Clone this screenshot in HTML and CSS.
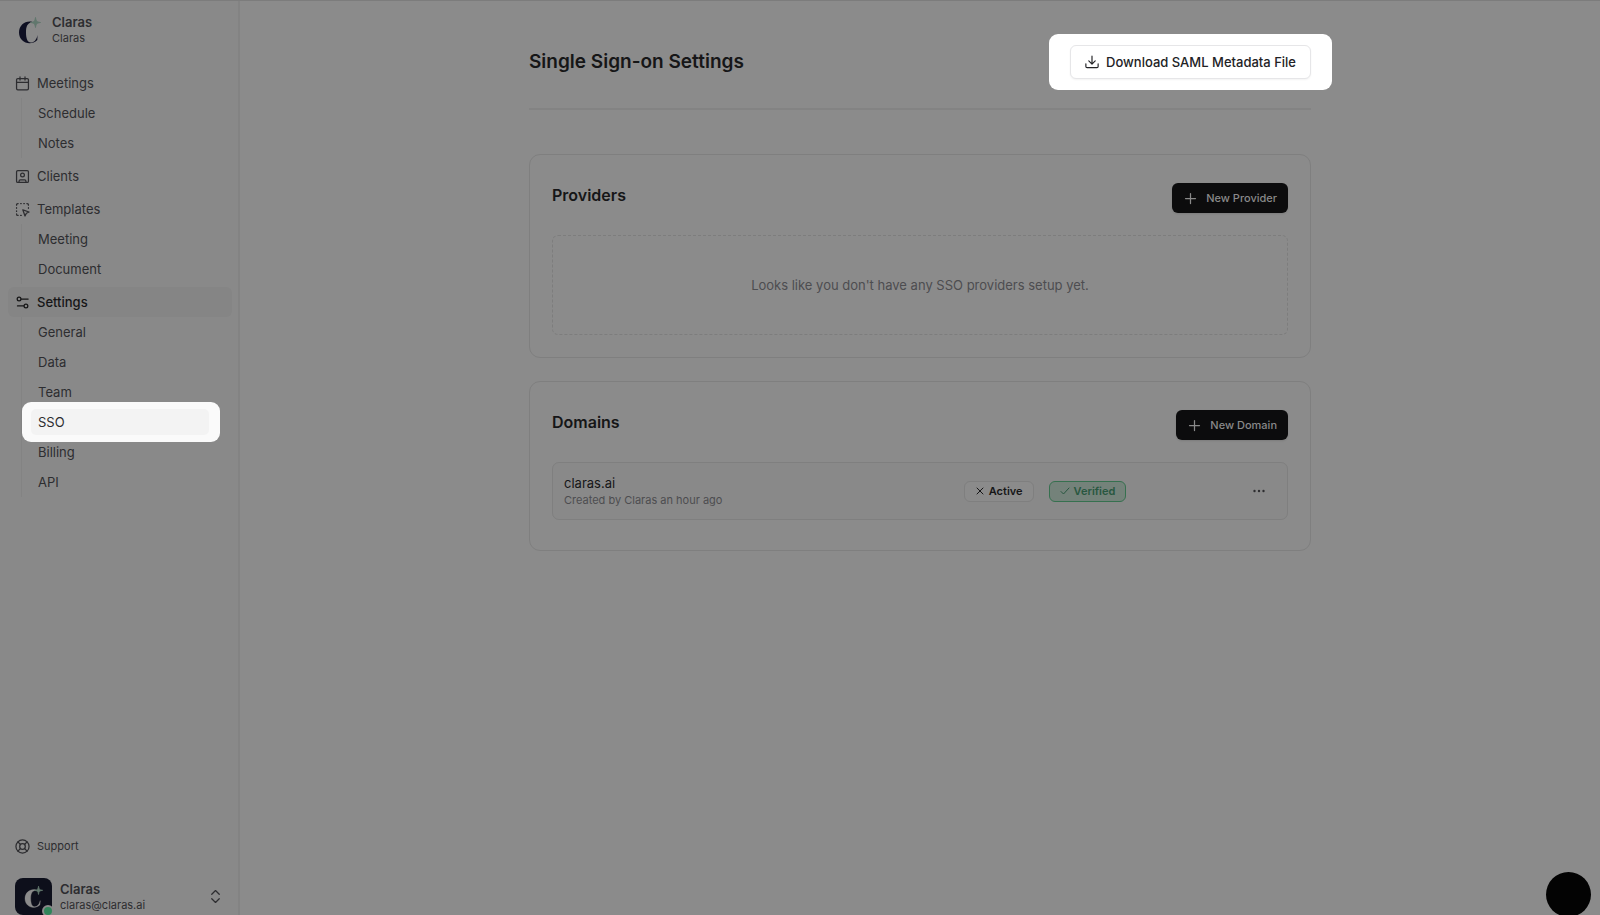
FILE: index.html
```html
<!DOCTYPE html>
<html lang="en">
  <head>
    <meta charset="UTF-8" />
    <meta name="viewport" content="width=device-width, initial-scale=1.0" />
    <title>Single Sign-on Settings</title>
    <link rel="stylesheet" href="styles.css">
  </head>
  <body>
    <aside class="sidebar">
      <div class="brand">
        <svg class="brand-logo" viewBox="0 0 24 28" width="24" height="28">
          <path d="M14 5.800C7 4.500 1 9.500 1 16.500C1 23 6 27.300 11.500 27.300C14.500 27.300 17 26.200 19.300 24L19.600 19C18.500 24 16 26.500 12.800 26.500C9.500 26.500 8 22.500 8 16.500C8 10.500 9.500 6.800 14 6.600Z" fill="#0e0f22" />
          <path d="M17.500 1.500C18 5.300 18.700 6 22.500 6.500C18.700 7 18 7.700 17.500 11.500C17 7.700 16.300 7 12.500 6.500C16.300 6 17 5.300 17.500 1.500Z" fill="#61776d" stroke="#61776d" />
        </svg>
        <div>
          <div class="name">Claras</div>
          <div class="sub-name">Claras</div>
        </div>
      </div>

      <nav class="nav">
        <div class="group">
          <a class="item" href="#">
            <svg class="icon" viewBox="0 0 24 24"><rect x="2.500" y="4" width="19" height="18" rx="2" /><path d="M2.500 10h19M8 1.500v5M16 1.500v5" /></svg>
            Meetings
          </a>
          <div class="sub">
            <a class="sub-item" href="#">Schedule</a>
            <a class="sub-item" href="#">Notes</a>
          </div>
        </div>
        <div class="group">
          <a class="item" href="#">
            <svg class="icon" viewBox="0 0 24 24"><rect x="2.500" y="2.500" width="19" height="19" rx="2" /><circle cx="12" cy="9.500" r="3" /><path d="M6.500 21.500v-2a2 2 0 0 1 2-2h7a2 2 0 0 1 2 2v2" /></svg>
            Clients
          </a>
        </div>
        <div class="group">
          <a class="item" href="#">
            <svg class="icon" viewBox="0 0 24 24"><path d="M2.500 5v-.5a2 2 0 0 1 2-2H5M9 2.500h1M14 2.500h1M19 2.500h.5a2 2 0 0 1 2 2V5M2.500 9v1M2.500 14v1M21.500 9v1M2.500 19v.5a2 2 0 0 0 2 2H5M9 21.500h1" /><path d="M12.500 12.500l10 3.500-4.300 2L16 22.500z" /></svg>
            Templates
          </a>
          <div class="sub">
            <a class="sub-item" href="#">Meeting</a>
            <a class="sub-item" href="#">Document</a>
          </div>
        </div>
        <div class="group">
          <a class="item active" href="#">
            <svg class="icon" viewBox="0 0 24 24"><path d="M21 6.500H10M14 17.500H4" /><circle cx="6.500" cy="6.500" r="3" /><circle cx="17.500" cy="17.500" r="3" /></svg>
            Settings
          </a>
          <div class="sub">
            <a class="sub-item" href="#">General</a>
            <a class="sub-item" href="#">Data</a>
            <a class="sub-item" href="#">Team</a>
            <a class="sub-item current" href="#">SSO</a>
            <a class="sub-item" href="#">Billing</a>
            <a class="sub-item" href="#">API</a>
          </div>
        </div>
      </nav>

      <a class="support" href="#">
        <svg class="icon" viewBox="0 0 24 24"><circle cx="12" cy="12" r="10.500" /><circle cx="12" cy="12" r="4.500" /><path d="M4.600 4.600l4.200 4.200M15.200 8.800l4.200-4.200M15.200 15.200l4.200 4.200M8.800 15.200l-4.200 4.200" /></svg>
        Support
      </a>

      <button class="account" type="button">
        <span class="avatar">
          <svg viewBox="0 0 24 28" width="20" height="23">
            <path d="M14 5.800C7 4.500 1 9.500 1 16.500C1 23 6 27.300 11.500 27.300C14.500 27.300 17 26.200 19.300 24L19.600 19C18.500 24 16 26.500 12.800 26.500C9.500 26.500 8 22.500 8 16.500C8 10.500 9.500 6.800 14 6.600Z" fill="#8b8b8b" stroke="#8b8b8b" stroke-width=".4" />
            <path d="M17.500 1.500C18 5.300 18.700 6 22.500 6.500C18.700 7 18 7.700 17.500 11.500C17 7.700 16.300 7 12.500 6.500C16.300 6 17 5.300 17.500 1.500Z" fill="#61776d" stroke="#61776d" />
          </svg>
          <span class="status"></span>
        </span>
        <span class="account-text">
          <span class="name">Claras</span>
          <span class="sub-name">claras@claras.ai</span>
        </span>
        <svg class="icon" viewBox="0 0 24 24"><path d="M6 8.500l6-6 6 6M6 15.500l6 6 6-6" /></svg>
      </button>
    </aside>

    <main class="main">
      <div class="content">
        <header class="page-header">
          <h1>Single Sign-on Settings</h1>
          <button class="download" type="button">
            <svg class="icon" viewBox="0 0 24 24"><path d="M12 2v13M6.500 10l5.500 5.500 5.500-5.500M1.500 15v4.500a2 2 0 0 0 2 2h17a2 2 0 0 0 2-2V15" /></svg>
            Download SAML Metadata File
          </button>
        </header>

        <section class="card">
          <div class="card-header">
            <h2>Providers</h2>
            <button class="add" type="button">
              <svg class="icon" viewBox="0 0 24 24"><path d="M12 4v16M4 12h16" /></svg>
              New Provider
            </button>
          </div>
          <div class="empty">Looks like you don't have any SSO providers setup yet.</div>
        </section>

        <section class="card domains">
          <div class="card-header">
            <h2>Domains</h2>
            <button class="add" type="button">
              <svg class="icon" viewBox="0 0 24 24"><path d="M12 4v16M4 12h16" /></svg>
              New Domain
            </button>
          </div>
          <div class="domain">
            <div class="domain-info">
              <div class="domain-name">claras.ai</div>
              <div class="domain-meta">Created by Claras an hour ago</div>
            </div>
            <div class="badges">
              <span class="badge">
                <svg viewBox="0 0 10 10" width="10" height="10"><path d="M2 2l6 6M8 2l-6 6" /></svg>
                Active
              </span>
              <span class="badge verified">
                <svg viewBox="0 0 10 10" width="10" height="10"><path d="M1 5.500l2.500 2.500L9 2" /></svg>
                Verified
              </span>
            </div>
            <button class="more" type="button" aria-label="More">
              <svg viewBox="0 0 12 4" width="12" height="4"><circle cx="1.500" cy="2" r="1.200" /><circle cx="6" cy="2" r="1.200" /><circle cx="10.500" cy="2" r="1.200" /></svg>
            </button>
          </div>
        </section>
      </div>
    </main>

    <button class="chat" type="button" aria-label="Chat"></button>
  </body>
</html>
```

FILE: styles.css
```css
* {
  box-sizing: border-box;
}
body {
  margin: 0;
  display: flex;
  height: 100vh;
  overflow: hidden;
  border-top: 1px solid #7c7c7c;
  background: #8b8b8b;
  color: #161617;
  font-family: Inter, "Liberation Sans", sans-serif;
  font-size: 13px;
  line-height: 20px;
}
h1,
h2 {
  margin: 0;
}
a {
  color: inherit;
  text-decoration: none;
}
button {
  font: inherit;
  cursor: pointer;
}
.icon {
  flex: none;
  width: 15px;
  height: 15px;
  fill: none;
  stroke: currentColor;
  stroke-width: 2;
  stroke-linecap: round;
  stroke-linejoin: round;
}

/* sidebar */
.sidebar {
  flex: none;
  display: flex;
  flex-direction: column;
  width: 240px;
  padding: 13px 6px 0 8px;
  border-right: 2px solid #838383;
  background: #898989;
  color: #2d2d30;
}
.brand {
  display: flex;
  align-items: center;
  gap: 10px;
  padding: 0 10px;
}
.name {
  display: block;
  font-size: 13px;
  font-weight: 600;
  line-height: 16px;
}
.sub-name {
  display: block;
  font-size: 11px;
  line-height: 16px;
}
.nav {
  display: flex;
  flex: 1;
  flex-direction: column;
  gap: 3px;
  margin-top: 22px;
}
.item {
  display: flex;
  align-items: center;
  gap: 7px;
  height: 30px;
  padding: 0 7px;
  border-radius: 6px;
}
.item.active {
  background: #858585;
  color: #161617;
  font-weight: 500;
}
.sub {
  margin-left: 13px;
  padding-left: 16px;
  border-left: 1px solid #838383;
}
.sub-item {
  display: block;
  line-height: 30px;
}
.sub-item.current {
  position: relative;
  z-index: 1;
}
.sub-item.current::before,
.sub-item.current::after {
  content: "";
  position: absolute;
  z-index: -1;
}
.sub-item.current::before {
  inset: -5px 12px -5px -16px;
  border-radius: 9px;
  background: #fafafa;
}
.sub-item.current::after {
  inset: 2px 23px 2px -7px;
  border-radius: 5px;
  background: #f3f3f3;
}
.support {
  display: flex;
  align-items: center;
  gap: 7px;
  height: 30px;
  padding: 0 7px;
  font-size: 11px;
}
.account {
  display: flex;
  align-items: center;
  gap: 8px;
  margin-top: 17px;
  padding: 0 9px 0 7px;
  border: 0;
  background: none;
  color: inherit;
  text-align: left;
}
.account-text {
  flex: 1;
}
.avatar {
  position: relative;
  display: flex;
  align-items: center;
  justify-content: center;
  width: 37px;
  height: 37px;
  border-radius: 8px;
  background: #0d0f1b;
}
.status {
  position: absolute;
  right: -2px;
  bottom: -2px;
  width: 12px;
  height: 12px;
  border: 2px solid #898989;
  border-radius: 50%;
  background: #31855a;
}

/* page */
.main {
  flex: 1;
  padding: 0 24px;
}
.content {
  max-width: 782px;
  margin: 0 auto;
}
.page-header {
  display: flex;
  align-items: center;
  justify-content: space-between;
  margin-bottom: 44px;
  padding: 44px 0 29px;
  border-bottom: 2px solid #838383;
}
h1 {
  font-size: 19px;
  font-weight: 600;
  line-height: 28px;
}
.download {
  position: relative;
  display: flex;
  align-items: center;
  gap: 7px;
  height: 34px;
  padding: 0 14px;
  border: 1px solid #e6e6e8;
  border-radius: 6px;
  background: #fff;
  box-shadow: 0 1px 2px rgba(0, 0, 0, 0.05);
  color: #222225;
  font-weight: 500;
}
.download .icon {
  width: 14px;
  height: 14px;
}
.download::before {
  content: "";
  position: absolute;
  z-index: -1;
  inset: -12px -22px;
  border-radius: 9px;
  background: #fff;
}
.card {
  margin-bottom: 23px;
  padding: 28px 22px 22px;
  border: 1px solid #7f7f7f;
  border-radius: 11px;
}
.card-header {
  display: flex;
  justify-content: space-between;
  margin-bottom: 22px;
}
h2 {
  font-size: 16px;
  font-weight: 600;
  line-height: 24px;
}
.add {
  display: flex;
  align-items: center;
  gap: 8px;
  height: 30px;
  padding: 0 11px;
  border: 0;
  border-radius: 6px;
  background: #0c0c0d;
  box-shadow: 0 1px 2px rgba(0, 0, 0, 0.1);
  color: #898989;
  font-size: 11px;
  font-weight: 500;
}
.empty {
  display: flex;
  align-items: center;
  justify-content: center;
  height: 100px;
  border: 1px dashed #7d7d7d;
  border-radius: 6px;
  color: #4d4d50;
}
.domains {
  padding-bottom: 30px;
}
.domain {
  display: flex;
  align-items: center;
  height: 58px;
  padding: 0 11px;
  border: 1px solid #7f7f7f;
  border-radius: 7px;
  background: #898989;
}
.domain-info {
  flex: 5;
}
.domain-name {
  line-height: 17px;
}
.domain-meta {
  color: #4d4d50;
  font-size: 11px;
  line-height: 16px;
}
.badges {
  display: flex;
  flex: 4;
  gap: 15px;
  padding-left: 52px;
}
.badge {
  display: flex;
  align-items: center;
  gap: 4px;
  height: 21px;
  padding: 0 10px;
  border: 1px solid #7f7f7f;
  border-radius: 6px;
  background: #8b8b8b;
  font-size: 11px;
  font-weight: 600;
}
.badge svg {
  fill: none;
  stroke: currentColor;
  stroke-linecap: round;
  stroke-linejoin: round;
}
.badge.verified {
  border-color: #36704f;
  background: #74827a;
  color: #285740;
}
.more {
  display: flex;
  padding: 8px 11px;
  border: 0;
  background: none;
  color: #2d2d30;
}
.more svg {
  fill: currentColor;
}
.chat {
  position: fixed;
  right: 9px;
  bottom: -2px;
  width: 45px;
  height: 45px;
  padding: 0;
  border: 0;
  border-radius: 50%;
  background: #030303;
}
```
